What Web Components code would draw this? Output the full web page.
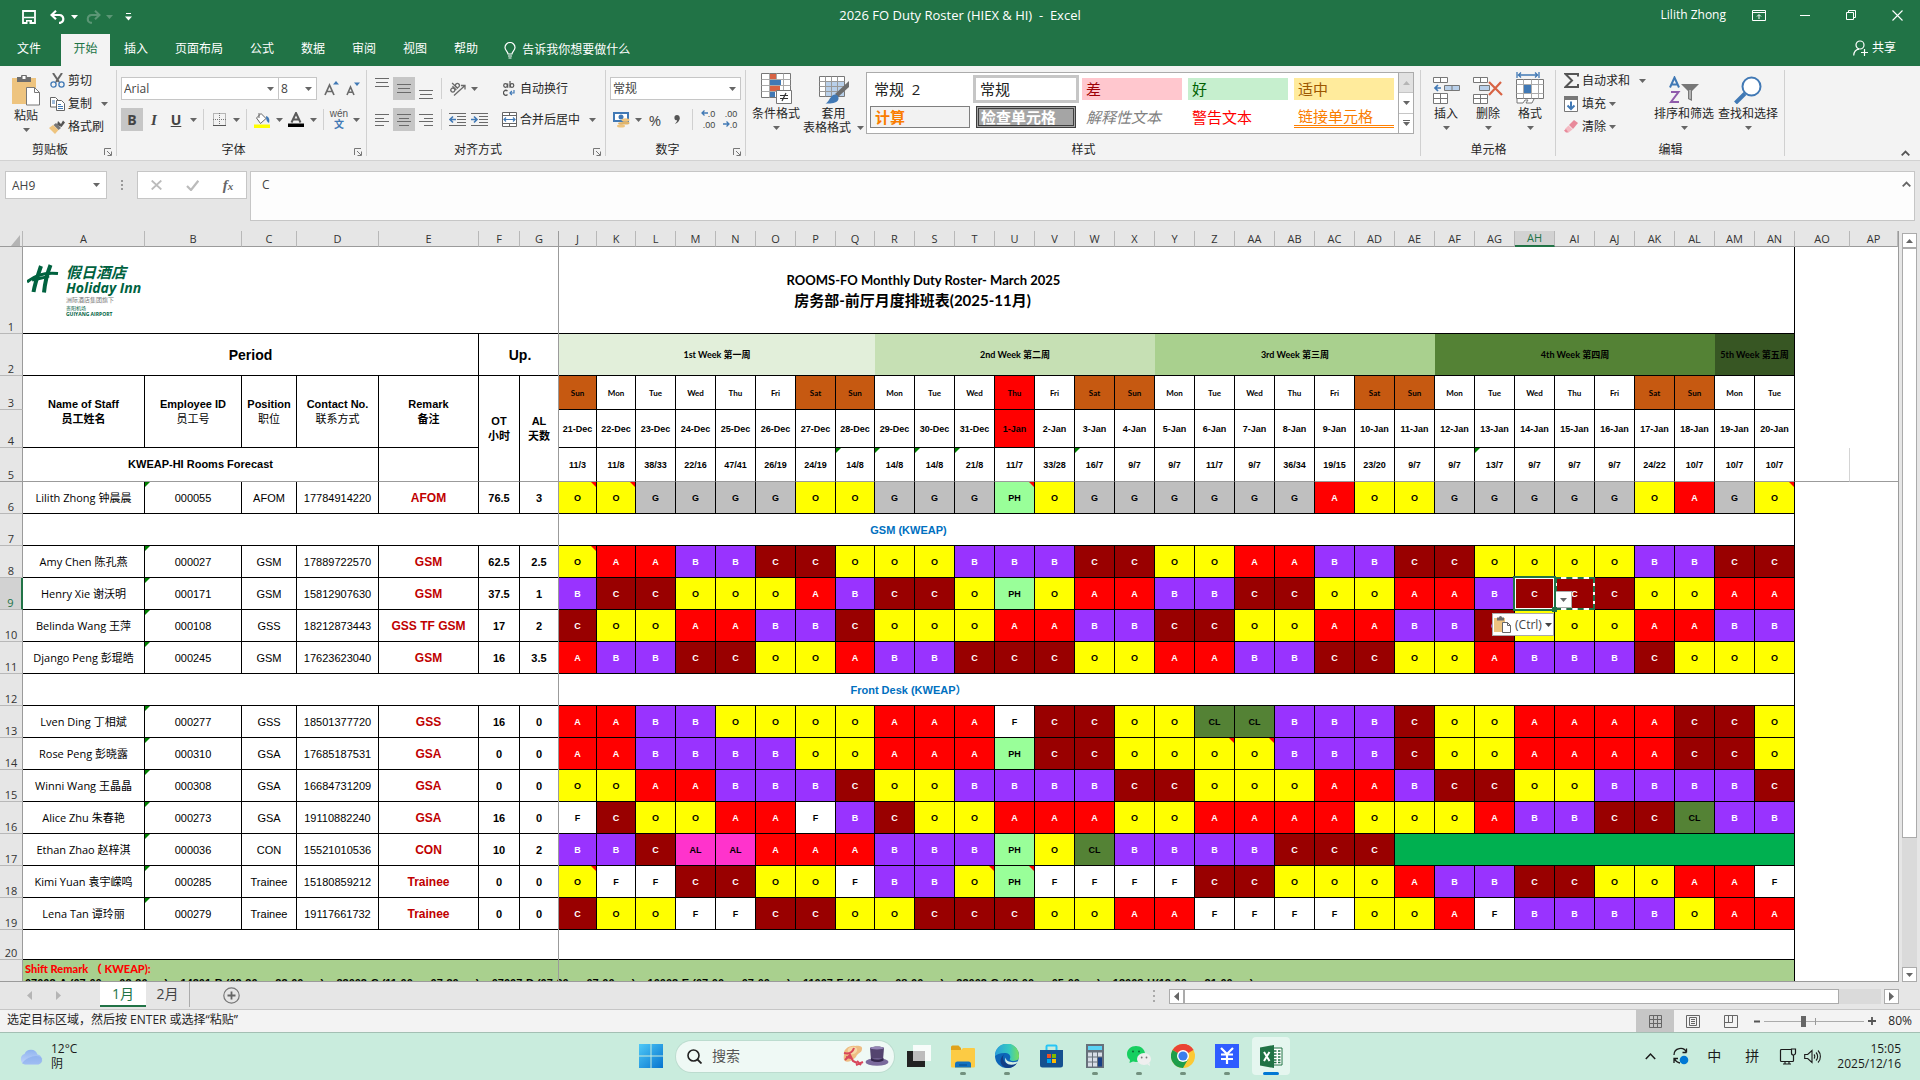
<!DOCTYPE html>
<html lang="zh-CN">
<head>
<meta charset="utf-8">
<title>2026 FO Duty Roster (HIEX &amp; HI) - Excel</title>
<style>
  html, body { margin: 0; height: 100%; }
  body { overflow: hidden; font: 12px/16px "Open Sans", "Noto Sans CJK SC", sans-serif; color: #262626; }
</style>
</head>
<body>
<excel-app></excel-app>
<script>
/* ---------- helpers ---------- */
const BASE = `<style>
  *, *::before, *::after { box-sizing: border-box; }
  button, input, select, textarea { font: inherit; color: inherit; margin: 0; padding: 0; border: 0; background: none; border-radius: 0; outline: 0; }
  button { display: inline-flex; align-items: center; justify-content: center; white-space: nowrap; }
</style>`;
function define(name, render) {
  customElements.define(name, class extends HTMLElement {
    connectedCallback() {
      if (this.shadowRoot) return;
      const t = document.createElement('template');
      t.innerHTML = BASE + render(this);
      this.attachShadow({ mode: 'open' }).append(t.content.cloneNode(true));
    }
  });
}
const attr = (el, n, d = '') => el.getAttribute(n) ?? d;

/* ---------- icons: [width, height, markup] ---------- */
const G = '#6a6a6a', BL = '#4179b5';
const lines = (rows) => rows.map(([x, y, w]) => `<path d="M${x} ${y}h${w}" stroke="${G}"/>`).join('');
const ICONS = {
  caret: [7, 4, `<path d="M0 0h7L3.500 4z" fill="currentColor"/>`],
  caretUp: [7, 4, `<path d="M0 4h7L3.500 0z" fill="currentColor"/>`],
  left: [5, 9, `<path d="M5 0v9L0 4.500z" fill="currentColor"/>`],
  right: [5, 9, `<path d="M0 0v9l5-4.500z" fill="currentColor"/>`],
  chevUp: [9, 6, `<path d="M.7 5.300 4.500 1.500l3.800 3.800" fill="none" stroke="currentColor" stroke-width="1.800"/>`],
  launcher: [8, 8, `<path d="M.5 7V.5H7M3 3l4 4M7.500 3.500v4h-4" fill="none" stroke="#777"/>`],
  save: [14, 14, `<path d="M1 1h12v12H1z" fill="none" stroke="#fff" stroke-width="1.800"/><path d="M2 7.500h10" stroke="#fff" stroke-width="1.500"/><path d="M4 10h6v4H4z" fill="#fff"/><path d="M5.500 11.500h2V14h-2z" fill="#217346"/>`],
  undo: [16, 14, `<path d="M6 .8 1.500 5 6 9.200M2 5h7.500a4 4 0 0 1 1 7.800H9" fill="none" stroke="#fff" stroke-width="2.200"/>`],
  redo: [16, 14, `<path d="M10 .8 14.500 5 10 9.200M14 5H6.500a4 4 0 0 0-1 7.800H7" fill="none" stroke="#5b9675" stroke-width="2"/>`],
  custom: [7, 8, `<path d="M1 .5h5" stroke="#fff"/><path d="M0 3.500h7L3.500 7.500z" fill="#fff"/>`],
  ribbonOpt: [14, 11, `<path d="M.5.500h13v10H.5zM.5 2.500h13" fill="none" stroke="#fff"/><path d="M7 9V5M5 6.500 7 4.500l2 2" fill="none" stroke="#fff"/>`],
  min: [10, 10, `<path d="M0 5.500h10" stroke="#fff"/>`],
  restore: [10, 10, `<path d="M.5 2.500h7v7h-7zM2.500 2.500v-2h7v7h-2" fill="none" stroke="#fff"/>`],
  close: [11, 11, `<path d="m.5.500 10 10m0-10-10 10" stroke="#fff" stroke-width="1.100"/>`],
  bulb: [12, 17, `<path d="M4 12c0-2.500-3-3.500-3-6.500a5 5 0 0 1 10 0c0 3-3 4-3 6.500zM4 14h4M4.500 16h3" fill="none" stroke="#fff" stroke-width="1.200"/>`],
  share: [15, 16, `<circle cx="7" cy="5" r="4" fill="none" stroke="#fff" stroke-width="1.200"/><path d="M.7 15.500c.3-4 2.500-6 5.300-6.300M8 12.500h7M11.500 9v7" fill="none" stroke="#fff" stroke-width="1.200"/>`],
  paste: [28, 31, `<path d="M0 3h24v26H0z" fill="#eec47f"/><path d="M5 2h4a3 3 0 0 1 6 0h4v5H5z" fill="#6d6d6d"/><rect x="10.500" y="1" width="3" height="3" fill="#fff"/><path d="M14.500 12.500h8l5 5v12.500h-13z" fill="#fff" stroke="#777"/><path d="M22.500 12.500v5h5" fill="none" stroke="#777"/>`],
  cut: [15, 15, `<path d="M3 0l6 9M12 0 6 9" stroke="#666" stroke-width="2"/><circle cx="3.500" cy="11.500" r="2.600" fill="none" stroke="${BL}" stroke-width="1.300"/><circle cx="11.500" cy="11.500" r="2.600" fill="none" stroke="${BL}" stroke-width="1.300"/>`],
  copy: [15, 14, `<path d="M.5.500h5l2.500 2.500v7H.5z" fill="#fff" stroke="#666"/><path d="M6.500 3.500h5l3 3v7h-8z" fill="#fff" stroke="#666"/><path d="M2 4h3M2 6h3M8 7.500h3M8 9.500h5M8 11.500h5" stroke="${BL}"/>`],
  painter: [16, 14, `<path d="M9 1l3 3 2-3.500 2 2L12.500 7 8 5z" fill="#555"/><path d="m7 3 5 5-2.500 2-5-5z" fill="#777"/><path d="M4 5 0 8l6 6 3.500-4z" fill="#eec47f"/>`],
  growA: [15, 15, `<path d="M1 14 5.500 4 10 14M2.500 10.500h6" fill="none" stroke="${G}" stroke-width="1.700"/><path d="M9 3.500h6L12 0z" fill="${BL}"/>`],
  shrinkA: [14, 14, `<path d="M1 13 4.500 5 8 13M2.300 10.300h4.500" fill="none" stroke="${G}" stroke-width="1.600"/><path d="M8 .5h6L11 4z" fill="${BL}"/>`],
  borders: [13, 13, `<path d="M.5.500h12v12H.5zM6.500 0v13M0 6.500h13" fill="none" stroke="#777" stroke-dasharray="1 1"/><path d="M0 12.500h13" stroke="#555"/>`],
  fill: [16, 16, `<path d="M2.500 6 7 1.500l5 5-5.500 5z" fill="#fff" stroke="#666"/><path d="M5 6V1" stroke="#666"/><path d="M12 4c4 1 3.500 5 3 7-2-1-3-3-3-7z" fill="${BL}"/><path d="M0 12.500h16V16H0z" fill="#ff0"/>`],
  fontColor: [16, 15, `<path d="M3.500 10.500 8 1l4.500 9.500M5 7.500h6" fill="none" stroke="#5a5a5a" stroke-width="2"/><path d="M0 11.500h16V15H0z"/>`],
  alignT: [14, 9, lines([[0, .5, 14], [1, 4.500, 12], [0, 8.500, 14]])],
  alignL: [14, 12, lines([[0, .5, 14], [0, 4.500, 9], [0, 7.500, 14], [0, 11.500, 9]])],
  alignC: [14, 12, lines([[0, .5, 14], [2, 4.500, 10], [0, 7.500, 14], [2, 11.500, 10]])],
  alignR: [14, 12, lines([[0, .5, 14], [5, 4.500, 9], [0, 7.500, 14], [5, 11.500, 9]])],
  orient: [17, 15, `<g transform="rotate(-45 7 8)"><circle cx="4" cy="6.500" r="2" fill="none" stroke="${G}" stroke-width="1.300"/><path d="M6.500 3.500v5.500M8.500 1v8" stroke="${G}" stroke-width="1.300"/><circle cx="10.500" cy="6.500" r="2" fill="none" stroke="${G}" stroke-width="1.300"/></g><path d="m5 14.500 11-10m-4 0h4v4" fill="none" stroke="${G}" stroke-width="1.300"/>`],
  outdent: [17, 13, `<path d="M0 .5h17M8 3.500h9M8 6.500h9M8 9.500h9M0 12.500h17" stroke="${G}"/><path d="M7 6.500H1.500M4 3.500l-3 3 3 3" fill="none" stroke="${BL}" stroke-width="1.600"/>`],
  indent: [17, 13, `<path d="M0 .5h17M8 3.500h9M8 6.500h9M8 9.500h9M0 12.500h17" stroke="${G}"/><path d="M0 6.500h5.500M3 3.500l3 3-3 3" fill="none" stroke="${BL}" stroke-width="1.600"/>`],
  wrap: [12, 15, `<circle cx="2.500" cy="4.500" r="1.800" fill="none" stroke="#555" stroke-width="1.200"/><path d="M4.700 2.500v4.200M7 0v6.700" stroke="#555" stroke-width="1.200"/><circle cx="9" cy="4.500" r="1.800" fill="none" stroke="#555" stroke-width="1.200"/><path d="M4.500 10a2.400 2.400 0 1 0 0 3.600" fill="none" stroke="#555" stroke-width="1.300"/><path d="M11 9v3H7m1.800-2L7 12l1.800 2" fill="none" stroke="${BL}" stroke-width="1.200"/>`],
  merge: [15, 15, `<path d="M.5.500h14v14H.5zM.5 3.500h14M.5 11.500h14M7.500.500v3M7.500 11.500v3" fill="#fff" stroke="#666"/><path d="M2 7.500h11M4 5.500l-2 2 2 2M11 5.500l2 2-2 2" fill="none" stroke="${BL}" stroke-width="1.200"/>`],
  currency: [17, 16, `<path d="M1 1h14v8H1z" fill="#fff" stroke="${BL}" stroke-width="2"/><circle cx="8" cy="5" r="2.500" fill="${BL}"/><ellipse cx="12.500" cy="8" rx="4" ry="1.800" fill="#eec47f"/><ellipse cx="12.500" cy="11" rx="4" ry="1.500" fill="#e0b46a"/><ellipse cx="8" cy="14" rx="4" ry="1.500" fill="#eec47f"/><ellipse cx="8" cy="11.500" rx="3" ry="1.300" fill="#e0b46a"/>`],
  comma: [6, 9, `<circle cx="3" cy="2.700" r="2.600" fill="#555"/><path d="M5.500 2.500C6 5.500 4 8 .8 9 3 7 3.500 5.500 3 3z" fill="#555"/>`],
  condFmt: [31, 31, `<path d="M.5.500h29v24H.5z" fill="#fff" stroke="#777"/><path d="M.5 6.500h29M.5 12.500h29M.5 18.500h29M8.500.500v24M15.500.500v24M22.500.500v24" stroke="#aaa"/><path d="M9 1h6v5H9zM9 13h10v5H9z" fill="#d86344"/><path d="M9 7h11v5H9zM9 19h5v5H9z" fill="${BL}"/><path d="M15.500 17.500h15v13h-15z" fill="#fff" stroke="#777"/><path d="M19 22.500h8M19 25.500h8M25 20l-4 8" stroke="#333" stroke-width="1.200"/>`],
  tableFmt: [30, 29, `<path d="M.5 1.500h25v20H.5z" fill="#fff" stroke="#777"/><path d="M7 7h18v14H7z" fill="#b9d0ea"/><path d="M.5 6.500h25M.5 11.500h25M.5 16.500h25M6.500 1.500v20M12.500 1.500v20M18.500 1.500v20" stroke="#999"/><path d="M30 6v6L19 22l-3-3z" fill="#6d6d6d"/><path d="M16 19.500c2 0 4 2 3.500 4.500-1 4-7 5-13 4.500 4-1.500 4-8 9.500-9z" fill="${BL}"/>`],
  insCell: [27, 28, `<path d="M.5 1.500h14v5H.5zM7.500 1.500v5M.5 17.500h14v10H.5zM7.500 17.500v10M.5 22.500h14" fill="#fff" stroke="#777"/><path d="M11.500 9.500h15v5h-15zM19 9.500v5" fill="#b9d0ea" stroke="#777"/><path d="M8 12H2m3-3-3 3 3 3" fill="none" stroke="${BL}" stroke-width="1.700"/>`],
  delCell: [30, 28, `<path d="M.5 1.500h14v5H.5zM7.500 1.500v5M.5 18.500h14v9H.5zM7.500 18.500v9M.5 22.500h14" fill="#fff" stroke="#777"/><path d="M6.500 9.500h10v5h-10z" fill="#b9d0ea" stroke="#777"/><path d="m16 6 13 13M28 6 16 19" stroke="#d86344" stroke-width="2.200"/>`],
  fmtCell: [29, 32, `<path d="M1 0v6M23 0v6M2 3h20M5 .5 2.500 3 5 5.500M19 .5 21.500 3 19 5.500" fill="none" stroke="${BL}" stroke-width="1.300"/><path d="M.5 7.500h27v19H.5z" fill="#fff" stroke="#777"/><path d="M.5 12.500h27M.5 21.500h27M7.500 7.500v19M15.500 7.500v19M22.500 7.500v19" stroke="#aaa"/><path d="M8 13h7v8H8z" fill="${BL}"/><path d="M1 27v4h6l2-3h3l-2 3h6l2-4" fill="#fff" stroke="#777"/>`],
  sigma: [15, 15, `<path d="M14 3.500V1H1.500L8 7.500 1.500 14H14v-3" fill="none" stroke="#555" stroke-width="2"/>`],
  fillDown: [14, 16, `<path d="M.5.500h13v15H.5z" fill="#fff" stroke="#777"/><path d="M0 0h14v4H0z" fill="#777"/><path d="M7 5.500V13M3.500 9.500 7 13l3.500-3.500" fill="none" stroke="${BL}" stroke-width="2"/>`],
  eraser: [14, 13, `<path d="m5 5 5-5 4 3-5 6z" fill="#e8899a"/><path d="M4.500 5.500 1 9l3.500 3.500 4-3z" fill="#f4b9c2"/><path d="M0 10.500 2 9l2.500 3.500H2z" fill="#e8899a"/>`],
  sort: [30, 28, `<path d="M1 11.500 5.500 1.500l4.500 10M2.500 8.500h6" fill="none" stroke="${BL}" stroke-width="2"/><path d="M2 16h7.500L2 26h8" fill="none" stroke="#8f5bab" stroke-width="2"/><path d="M12 8h18l-7 7v10l-4-2v-8z" fill="#777"/><path d="M20.500 14v8.500l1 .5V14z" fill="#eee"/>`],
  find: [28, 28, `<circle cx="17.500" cy="10.500" r="9" fill="#fff" stroke="${BL}" stroke-width="2"/><path d="M11 17.500 1.500 27" stroke="${BL}" stroke-width="4"/>`],
  cancel: [11, 10, `<path d="m.7.500 9.600 9M10.300.500.700 9.500" stroke="#bbb" stroke-width="1.800"/>`],
  check: [13, 11, `<path d="m1 6 4 4L12.300.800" fill="none" stroke="#bbb" stroke-width="2.200"/>`],
  corner: [9, 11, `<path d="M9 0v11H0z" fill="#b4b4b4"/>`],
  plus: [17, 17, `<circle cx="8.500" cy="8.500" r="7.700" fill="none" stroke="#777" stroke-width="1.200"/><path d="M8.500 4.500v8M4.500 8.500h8" stroke="#666" stroke-width="1.800"/>`],
  vNormal: [13, 13, `<path d="M.5.500h12v12H.5zM.5 4.500h12M.5 8.500h12M4.500.500v12M8.500.500v12" fill="none" stroke="#666"/>`],
  vPage: [14, 13, `<path d="M.5.500h13v12H.5z" fill="none" stroke="#666"/><path d="M3.500 2.500h7v8h-7zM5 4.500h4M5 6.500h4M5 8.500h4" fill="none" stroke="#666"/>`],
  vBreak: [14, 13, `<path d="M.5.500h13v12H.5zM.5 7.500h8V.5M4.500.500v7" fill="none" stroke="#666"/>`],
  zMinus: [6, 3, `<path d="M0 1.500h6" stroke="#555" stroke-width="2"/>`],
  zPlus: [8, 8, `<path d="M0 4h8M4 0v8" stroke="#555" stroke-width="1.800"/>`],
  pasteSm: [18, 17, `<path d="M0 2h11v14H0z" fill="#eec47f"/><path d="M3 1.500h2a1.500 1.500 0 0 1 3 0h2v3H3z" fill="#6d6d6d"/><path d="M8.500 6.500h5l3 3v7h-8z" fill="#fff" stroke="#666"/><path d="M13.500 6.500v3h3" fill="none" stroke="#666"/>`],
  cloud: [25, 17, `<defs><linearGradient id="cl" x1="0" y1="0" x2="0" y2="1"><stop offset="0" stop-color="#8fb4ef"/><stop offset="1" stop-color="#c3d6fb"/></linearGradient></defs><path d="M6 16.500a5.500 5.500 0 0 1-.5-10.500 7 7 0 0 1 13 .5 5.200 5.200 0 0 1 1 10z" fill="url(#cl)"/><path d="M3 15.500c5-7 16-10 20-5a5.200 5.200 0 0 1-3.500 6H6z" fill="#7ba3ea" opacity=".5"/>`],
  start: [24, 24, `<defs><linearGradient id="w" x1="0" y1="0" x2="1" y2="1"><stop offset="0" stop-color="#4fc9f7"/><stop offset="1" stop-color="#0674cf"/></linearGradient></defs><path d="M0 0h11.500v11.500H0zM12.500 0H24v11.500H12.500zM0 12.500h11.500V24H0zM12.500 12.500H24V24H12.500z" fill="url(#w)"/>`],
  search: [15, 15, `<circle cx="6.500" cy="6.500" r="5.500" fill="none" stroke="#222" stroke-width="1.600"/><path d="m10.500 10.500 4 4" stroke="#222" stroke-width="1.800"/>`],
  hats: [47, 22, `<path d="M2 9C1 5 7 0 13 1c3-1 8 0 7 3 0 4-5 4-6 8-4 4-9 6-11 4-2-1-1-5-1-7z" fill="#eebd83"/><path d="M6 4c2-3 8-3 9 0s-3 6-6 5-4-3-3-5z" fill="#f6d9a8"/><path d="M2 8c4 1 8 1 10-5M4 12l5 1M3 15l5-5 3 6 4 2M14 20l7-3M15 16l4 4" fill="none" stroke="#d8465b" stroke-width="2"/><path d="M28 3c3-2 12-2 14 0l-1 12H29z" fill="#54446f"/><ellipse cx="35" cy="17" rx="11.500" ry="3.800" fill="#7a6a9c"/><path d="M29 13c4 2 8 2 12.500 0v2.500c-4 2-8.500 2-12.500 0z" fill="#35284d"/><ellipse cx="35" cy="3" rx="7" ry="1.500" fill="#9485b5"/>`],
  taskview: [24, 24, `<path d="M0 7h18v16H0z" fill="#222"/><path d="M6 1h18v16H6z" fill="#fff" opacity=".85"/><path d="M6 7h12v10H6z" fill="#bdbdbd"/>`],
  explorer: [24, 23, `<path d="M0 2a1.500 1.500 0 0 1 1.500-1.500h6L10 3v5H0z" fill="#e0a21b"/><path d="M0 5h10l2-2h11a1 1 0 0 1 1 1v17.500a1 1 0 0 1-1 1H1a1 1 0 0 1-1-1z" fill="#fccb44"/><path d="M4 22.500V19a2.500 2.500 0 0 1 2.500-2.500h11A2.500 2.500 0 0 1 20 19v3.500z" fill="#1272bf"/><path d="M8 20h8" stroke="#0b4f91" stroke-width="1.200"/>`],
  edge: [24, 24, `<defs><linearGradient id="e1" x1="0" y1=".3" x2="1" y2=".3"><stop offset="0" stop-color="#2a9fdc"/><stop offset=".6" stop-color="#35c9c0"/><stop offset="1" stop-color="#7ade5a"/></linearGradient></defs><circle cx="12" cy="12" r="12" fill="#0d66b8"/><path d="M0 12A12 12 0 0 1 24 11c.5 4-2 6-5 6-3 .2-5-1-4-2.500 1-2-.3-5-4-5.500C6 8.500 1.500 10 0 12z" fill="url(#e1)"/><path d="M8 13c0 6 6 9 14 6-3 5-9 6-13 4C4 20 4 13 11 9c-2 1-3 2.500-3 4z" fill="#123f86"/><path d="M10.500 13.500C11 18 17 19 22.500 17.500l-1 2c-7 3-13 0-11-6z" fill="#d5efe5"/>`],
  store: [23, 24, `<path d="M6.500 7V2.500a1 1 0 0 1 1-1h8a1 1 0 0 1 1 1V7" fill="none" stroke="#27c5f5" stroke-width="2"/><path d="M0 6h23v15a2.500 2.500 0 0 1-2.500 2.500h-18A2.500 2.500 0 0 1 0 21z" fill="#15508f"/><path d="M7 10h4v4H7z" fill="#f25022"/><path d="M12 10h4v4h-4z" fill="#7fba00"/><path d="M7 15h4v4H7z" fill="#00a4ef"/><path d="M12 15h4v4h-4z" fill="#ffb900"/>`],
  calc: [18, 24, `<path d="M0 0h18v24H0z" fill="#66707a"/><path d="M2 2h14v4H2z" fill="#5bd3f5"/><path d="M2 8.500h4v4H2zM7 8.500h4v4H7zM12 8.500h4v4h-4zM2 13.500h4v4H2zM7 13.500h4v4H7zM2 18.500h4v4H2zM7 18.500h4v4H7z" fill="#d7dde6"/><path d="M12 13.500h4v9h-4z" fill="#173f85"/>`],
  wechat: [24, 20, `<path d="M9 0c5 0 9 3.500 9 8s-4 8-9 8c-1 0-2-.2-3-.5L2.500 17l.5-3C1 12.500 0 10.500 0 8c0-4.500 4-8 9-8z" fill="#17cf60"/><ellipse cx="17" cy="13" rx="7" ry="6" fill="#efefef"/><path d="M20 18l3 2-.5-3z" fill="#efefef"/><circle cx="6" cy="5.500" r="1" fill="#0b6b32"/><circle cx="12" cy="5.500" r="1" fill="#0b6b32"/><circle cx="14.700" cy="11.500" r=".9" fill="#777"/><circle cx="19.500" cy="11.500" r=".9" fill="#777"/>`],
  chrome: [24, 24, `<circle cx="12" cy="12" r="12" fill="#fcc934"/><path d="M12 12 1.600 6A12 12 0 0 1 22.400 6z" fill="#ea4335"/><path d="M12 0a12 12 0 0 1 10.400 6H12z" fill="#ea4335"/><path d="M1.600 6A12 12 0 0 0 12 24l5.200-9L12 12z" fill="#1e9e4b"/><circle cx="12" cy="12" r="6" fill="#fff"/><circle cx="12" cy="12" r="4.600" fill="#3b7ded"/>`],
  yen: [24, 24, `<path d="M0 0h24v24H0z" fill="#2f5cff"/><path d="M6 4l6 6 6-6M6 10.500h12M6 15h12M12 10v10" fill="none" stroke="#fff" stroke-width="2.200"/>`],
  excel: [23, 23, `<path d="M12 3h10v17H12z" fill="#fff" stroke="#207245"/><path d="M14 6h2.500M18 6h2.500M14 9h2.500M18 9h2.500M14 12h2.500M18 12h2.500M14 15h2.500M18 15h2.500M14 17.500h2.500M18 17.500h2.500" stroke="#207245" stroke-width="1.400"/><path d="M0 2.500 14 0v23L0 20.500z" fill="#207245"/><path d="m4 7 5.500 9M9.500 7 4 16" stroke="#fff" stroke-width="2"/>`],
  trayUp: [11, 8, `<path d="m.8 7 4.700-5 4.700 5" fill="none" stroke="#1b1b1b" stroke-width="1.500"/>`],
  sync: [18, 18, `<path d="M2 8a6.500 6.500 0 0 1 12.500-2.500V1.500M14.500 5.500h-4M2 16v-4.500h4M2.500 11.500A7 7 0 0 0 8 16" fill="none" stroke="#1b1b1b" stroke-width="1.300"/><circle cx="12" cy="13" r="4.300" fill="#0078d4"/>`],
  monitor: [18, 17, `<path d="M12 1.500H2.500a1 1 0 0 0-1 1v10a1 1 0 0 0 1 1h11a1 1 0 0 0 1-1V9M4 16h8M6 13.500V16M10 13.500V16M12.500 1h4v4a2 2 0 0 1-4 0zM14.500 7v3" fill="none" stroke="#1b1b1b" stroke-width="1.200"/>`],
  speaker: [17, 15, `<path d="M.7 5.500h3L8 1.500v12l-4.300-4h-3zM10 5.500c1 1 1 3 0 4M12 3.500c2.200 2.200 2.200 6 0 8M14 1.500c3.200 3.200 3.200 9 0 12" fill="none" stroke="#1b1b1b" stroke-width="1.100"/>`]
};
define('x-icon', el => {
  const [w, h, m] = ICONS[attr(el, 'name')];
  return `<style>:host{display:inline-flex;flex:none}svg{display:block}</style>
  <svg width="${w}" height="${h}" viewBox="0 0 ${w} ${h}" aria-hidden="true">${m}</svg>`;
});

/* ---------- title bar ---------- */
define('title-bar', () => `<style>
  :host{display:grid;grid-template-columns:1fr auto 1fr;align-items:center;height:34px;background:#217346;color:#fff}
  .quick{display:flex;align-items:center;padding-left:22px}
  .quick x-icon[name=undo]{margin-left:14px}.quick x-icon[name=redo]{margin-left:7px}
  .quick .c{margin-left:5px}.quick .dim{color:#5b9675}.quick x-icon[name=custom]{margin-left:12px}
  .right{display:flex;justify-content:flex-end;align-items:center}
  .user{margin-right:10px}
  h1{font-size:13px;font-weight:400;margin:0;padding-bottom:4px;white-space:pre}
  .right{padding-bottom:4px}
  .win{width:46px;height:30px}
  </style>
  <div class="quick"><button aria-label="保存"><x-icon name="save"></x-icon></button><button aria-label="撤消"><x-icon name="undo"></x-icon><x-icon class="c" name="caret"></x-icon></button>
  <button aria-label="恢复" class="dim"><x-icon name="redo"></x-icon><x-icon class="c" name="caret"></x-icon></button><button aria-label="自定义"><x-icon name="custom"></x-icon></button></div>
  <h1>2026 FO Duty Roster (HIEX &amp; HI)  -  Excel</h1>
  <div class="right"><span class="user">Lilith Zhong</span>
  <button class="win" aria-label="功能区选项"><x-icon name="ribbonOpt"></x-icon></button><button class="win" aria-label="最小化"><x-icon name="min"></x-icon></button>
  <button class="win" aria-label="还原"><x-icon name="restore"></x-icon></button><button class="win" aria-label="关闭"><x-icon name="close"></x-icon></button></div>`);

/* ---------- ribbon tabs ---------- */
define('ribbon-tabs', () => `<style>
  :host{display:flex;height:32px;background:#217346;color:#fff;padding:0 24px 0 4px}
  nav{display:flex;gap:1px}
  .tab{padding:0 13px 2px;height:32px}
  .file{margin-right:6px}
  .on{background:#f3f3f3;color:#217346;width:49px}
  .tell{gap:6px;margin-left:12px}
  .share{gap:4px;margin-left:auto;padding-bottom:4px}
  </style><nav>
  ${['文件', '开始', '插入', '页面布局', '公式', '数据', '审阅', '视图', '帮助'].map((t, i) => `<button class="tab${i == 0 ? ' file' : i == 1 ? ' on' : ''}">${t}</button>`).join('')}
  <button class="tell"><x-icon name="bulb"></x-icon>告诉我你想要做什么</button></nav>
  <button class="share"><x-icon name="share"></x-icon>共享</button>`);

/* ---------- ribbon parts ---------- */
define('ribbon-group', el => `<style>
  :host{display:flex;flex-direction:column;position:relative;height:94px;flex:none}
  :host::after{content:"";position:absolute;right:0;top:4px;bottom:4px;width:1px;background:#d0d0d0}
  .body{flex:1;display:flex;padding:0 4px}
  .foot{display:flex;align-items:center;justify-content:center;height:16px;margin-bottom:2px}
  :host([launch]) .foot{padding-right:17px}
  .launch{position:absolute;right:5px;bottom:4px}
  </style><div class="body"><slot></slot></div><div class="foot">${attr(el, 'label')}</div>
  ${el.hasAttribute('launch') ? `<button class="launch" aria-label="${attr(el, 'label')}设置"><x-icon name="launcher"></x-icon></button>` : ''}`);

define('tool-button', el => {
  const label = attr(el, 'label'), icon = attr(el, 'icon');
  return `<style>
  :host{display:inline-flex;flex:none}
  button{height:23px}
  .i{width:22px;display:inline-flex;justify-content:center;align-items:center}
  :host([on]) .i{background:#c6c6c6;height:23px}
  .c{width:12px;display:inline-flex;justify-content:center;color:#666}
  :host([wide]) .c{width:24px}
  </style><button aria-label="${label || attr(el, 'tip', icon)}"><span class="i">${icon ? `<x-icon name="${icon}"></x-icon>` : '<slot></slot>'}</span>${label ? `<span>${label}</span>` : ''}${el.hasAttribute('caret') ? '<span class="c"><x-icon name="caret"></x-icon></span>' : ''}</button>`;
});

define('big-button', el => `<style>
  :host{display:inline-flex;flex:none}
  button{flex:1;flex-direction:column;justify-content:flex-start;line-height:14px;padding-top:6px}
  .i{height:32px;display:flex;align-items:flex-end;margin-bottom:3px}
  .c{height:14px;display:flex;align-items:center;gap:6px}
  x-icon[name=caret]{color:#666}
  </style><button><span class="i"><x-icon name="${attr(el, 'icon')}"></x-icon></span><span>${attr(el, 'label')}</span><span class="c">${attr(el, 'label2')}<x-icon name="caret"></x-icon></span></button>`);

define('combo-box', el => `<style>
  :host{display:inline-block;position:relative;height:23px;flex:none}
  select{appearance:none;width:100%;height:23px;background:#fff;border:1px solid #c6c6c6;padding:0 14px 0 2px;color:#444}
  x-icon{position:absolute;right:5px;top:10px;color:#666;pointer-events:none}
  </style><select aria-label="${attr(el, 'label')}"><option>${attr(el, 'value')}</option></select><x-icon name="caret"></x-icon>`);

define('style-gallery', () => {
  const s = [['常规&nbsp; 2', 'n2'], ['常规', 'sel'], ['差', 'bad'], ['好', 'good'], ['适中', 'neu'], ['计算', 'calc'], ['检查单元格', 'chk'], ['解释性文本', 'exp'], ['警告文本', 'warn'], ['链接单元格', 'link']];
  return `<style>
  :host{display:flex;height:62px;border:1px solid #ababab;background:#fff;margin-top:6px}
  .g{display:grid;grid-template-columns:repeat(5,100px);grid-auto-rows:22px;gap:6px;padding:5px 3px 0;width:531px}
  .g button{justify-content:flex-start;padding-left:4px;font-size:15px;line-height:20px;color:#222}
  .g .sel{outline:3px solid #c6c6c6}
  .g .bad{background:#ffc7ce;color:#9c0006}.g .good{background:#c6efce;color:#006100}.g .neu{background:#ffeb9c;color:#9c5700}
  .g .calc{background:#f2f2f2;border:1px solid #7f7f7f;color:#fa7d00;font-weight:700}
  .g .chk{background:#a5a5a5;border:3px double #3f3f3f;color:#fff;font-weight:700;padding-left:2px}
  .g .exp{color:#7f7f7f;font-style:italic}.g .warn{color:#f00}
  .g .link{color:#fa7d00;border-bottom:3px double #ff8001}
  .s{display:flex;flex-direction:column;width:15px;border-left:1px solid #ababab;flex:none}
  .s button{flex:1;color:#666}.s button+button{border-top:1px solid #c6c6c6}.s button:first-child{background:#e1e1e1;color:#b5b5b5}
  .more{flex-direction:column;gap:1px}.more::before{content:"";width:7px;height:1px;background:#666}
  </style><div class="g">${s.map(([t, c]) => `<button class="${c}">${t}</button>`).join('')}</div>
  <div class="s"><button aria-label="上一行"><x-icon name="caretUp"></x-icon></button><button aria-label="下一行"><x-icon name="caret"></x-icon></button><button class="more" aria-label="其他"><x-icon name="caret"></x-icon></button></div>`;
});

define('excel-ribbon', () => `<style>
  :host{display:flex;height:95px;background:#f3f3f3;border-bottom:1px solid #d2d2d2}
  .col{display:flex;flex-direction:column}
  .two{padding-top:11px;gap:8px}.three{padding-top:3px}
  .row{display:flex;height:23px;align-items:center}
  .sep{width:1px;height:21px;background:#d0d0d0;margin:0 4px}
  .tall{width:1px;height:55px;background:#d0d0d0;margin:10px 4px 0}
  .clip{width:117px}.font{width:250px}.align{width:239px}.num{width:140px}.style{width:675px}.cells{width:135px}.edit{width:229px}
  .f1{width:158px}.f2{width:39px;margin:0 3px 0 -1px}.n1{width:131px}
  .paste{margin:2px 6px 0 8px}
  b,i,u{font-size:14px;color:#444}i{font-family:"Liberation Serif",serif;font-weight:700;font-size:15px}u{font-weight:700}
  .pct{font-size:15px;color:#444}
  .wen{font:10px/11px "Liberation Sans","Noto Sans CJK SC",sans-serif;color:#555;text-align:center}.wen em{display:block;height:12px;line-height:12px;font-style:normal;color:#4179b5;font-weight:700}
  .dec{display:block;font:9px/11px "Liberation Sans",sans-serif;text-align:right;color:#444}.dec em{font-style:normal;color:#4179b5}
  .dec svg{vertical-align:1px}
  .t{margin-top:-12px}.bt{margin-top:12px}
  .cells big-button{width:42px}
  .cf{margin:0 3px 0 2px}.tf{margin-right:2px}.so{margin-right:4px}
  .end{margin-left:auto;align-self:flex-end;padding:0 10px 4px 0;color:#555;line-height:1}
  </style>
  <ribbon-group class="clip" label="剪贴板" launch><big-button class="paste" icon="paste" label="粘贴"></big-button>
   <div class="col three"><tool-button icon="cut" label="剪切"></tool-button><tool-button icon="copy" label="复制" caret wide></tool-button><tool-button icon="painter" label="格式刷"></tool-button></div></ribbon-group>
  <ribbon-group class="font" label="字体" launch><div class="col two">
   <div class="row"><combo-box class="f1" label="字体" value="Arial"></combo-box><combo-box class="f2" label="字号" value="8"></combo-box><tool-button icon="growA"></tool-button><tool-button icon="shrinkA"></tool-button></div>
   <div class="row"><tool-button on tip="加粗"><b>B</b></tool-button><tool-button tip="倾斜"><i>I</i></tool-button><tool-button caret tip="下划线"><u>U</u></tool-button><span class="sep"></span><tool-button icon="borders" caret></tool-button><span class="sep"></span><tool-button icon="fill" caret></tool-button><tool-button icon="fontColor" caret></tool-button><span class="sep"></span><tool-button caret tip="拼音"><span class="wen">wén<em>文</em></span></tool-button></div>
  </div></ribbon-group>
  <ribbon-group class="align" label="对齐方式" launch>
   <div class="col two"><div class="row"><tool-button class="t" icon="alignT"></tool-button><tool-button on icon="alignT"></tool-button><tool-button class="bt" icon="alignT"></tool-button><span class="sep"></span><tool-button icon="orient" caret></tool-button></div>
   <div class="row"><tool-button icon="alignL"></tool-button><tool-button on icon="alignC"></tool-button><tool-button icon="alignR"></tool-button><span class="sep"></span><tool-button icon="outdent"></tool-button><tool-button icon="indent"></tool-button></div></div>
   <span class="tall"></span>
   <div class="col two"><div class="row"><tool-button icon="wrap" label="自动换行"></tool-button></div><div class="row"><tool-button icon="merge" label="合并后居中" caret wide></tool-button></div></div></ribbon-group>
  <ribbon-group class="num" label="数字" launch><div class="col two"><div class="row"><combo-box class="n1" label="数字格式" value="常规"></combo-box></div>
   <div class="row"><tool-button icon="currency" caret></tool-button><tool-button tip="百分比"><span class="pct">%</span></tool-button><tool-button icon="comma"></tool-button><span class="sep"></span><tool-button tip="增加小数位"><span class="dec"><svg width="7" height="6" viewBox="0 0 7 6"><path d="M7 3H1M3.500.5 1 3l2.500 2.500" fill="none" stroke="#4179b5" stroke-width="1.300"/></svg>.0<br>.00</span></tool-button><tool-button tip="减少小数位"><span class="dec">.00<br><svg width="7" height="6" viewBox="0 0 7 6"><path d="M0 3h6M3.500.5 6 3 3.500 5.500" fill="none" stroke="#4179b5" stroke-width="1.300"/></svg>.0</span></tool-button></div></div></ribbon-group>
  <ribbon-group class="style" label="样式"><big-button class="cf" icon="condFmt" label="条件格式"></big-button><big-button class="tf" icon="tableFmt" label="套用" label2="表格格式"></big-button><style-gallery></style-gallery></ribbon-group>
  <ribbon-group class="cells" label="单元格"><big-button icon="insCell" label="插入"></big-button><big-button icon="delCell" label="删除"></big-button><big-button icon="fmtCell" label="格式"></big-button></ribbon-group>
  <ribbon-group class="edit" label="编辑"><div class="col three"><tool-button icon="sigma" label="自动求和" caret wide></tool-button><tool-button icon="fillDown" label="填充" caret></tool-button><tool-button icon="eraser" label="清除" caret></tool-button></div><big-button class="so" icon="sort" label="排序和筛选"></big-button><big-button icon="find" label="查找和选择"></big-button></ribbon-group>
  <button class="end" aria-label="折叠功能区"><x-icon name="chevUp"></x-icon></button>`);

/* ---------- formula bar ---------- */
define('formula-bar', () => `<style>
  :host{display:flex;align-items:flex-start;height:70px;background:#e6e6e6;padding:10px 5px 0}
  .name{position:relative;width:102px;height:28px}
  .name input{width:100%;height:100%;border:1px solid #c6c6c6;background:#fff;padding-left:6px;color:#444}
  .name x-icon{position:absolute;right:7px;top:12px;color:#666}
  .dots{width:3px;margin:9px 13px 0 14px;display:grid;gap:2px}.dots i{width:2px;height:2px;background:#999}
  .fx{display:flex;width:110px;height:28px;border:1px solid #c6c6c6;background:#fff}
  .fx button{flex:1}
  .f{font:italic 700 15px "Liberation Serif",serif;color:#666}.f small{font-size:11px}
  .in{position:relative;flex:1;height:50px;margin-left:3px}
  textarea{display:block;width:100%;height:100%;resize:none;border:1px solid #c6c6c6;background:#fdfdfd;padding:5px 11px;color:#444}
  .in x-icon{position:absolute;right:4px;top:10px;color:#666}
  </style>
  <div class="name"><input aria-label="名称框" value="AH9"><x-icon name="caret"></x-icon></div>
  <div class="dots"><i></i><i></i><i></i></div>
  <div class="fx"><button aria-label="取消"><x-icon name="cancel"></x-icon></button><button aria-label="输入"><x-icon name="check"></x-icon></button><button aria-label="插入函数"><span class="f">f<small>x</small></span></button></div>
  <div class="in"><textarea aria-label="编辑栏">C</textarea><x-icon name="chevUp"></x-icon></div>`);

/* ---------- worksheet ---------- */
const DAYS = 'J K L M N O P Q R S T U V W X Y Z AA AB AC AD AE AF AG AH AI AJ AK AL AM AN'.split(' ');
const FORECAST = '11/3 11/8 38/33 22/16 47/41 26/19 24/19 14/8 14/8 14/8 21/8 11/7 33/28 16/7 9/7 9/7 11/7 9/7 36/34 19/15 23/20 9/7 9/7 13/7 9/7 9/7 9/7 24/22 10/7 10/7 10/7'.split(' ');
const WEEKDAY = ['Sun', 'Mon', 'Tue', 'Wed', 'Thu', 'Fri', 'Sat'];
const STAFF = {
  6: ['Lilith Zhong 钟晨晨', '000055', 'AFOM', '17784914220', 'AFOM', '76.5', '3', 'O O G G G G O O G G G PH O G G G G G G A O O G G G G G O A G O'],
  8: ['Amy Chen 陈孔燕', '000027', 'GSM', '17889722570', 'GSM', '62.5', '2.5', 'O A A B B C C O O O B B B C C O O A A B B C C O O O O B B C C'],
  9: ['Henry Xie 谢沃明', '000171', 'GSM', '15812907630', 'GSM', '37.5', '1', 'B C C O O O A B C C O PH O A A B B C C O O A A B C C C O O A A'],
  10: ['Belinda Wang 王萍', '000108', 'GSS', '18212873443', 'GSS TF GSM', '17', '2', 'C O O A A B B C O O O A A B B C C O O A A B B C O O O A A B B'],
  11: ['Django Peng 彭琨皓', '000245', 'GSM', '17623623040', 'GSM', '16', '3.5', 'A B B C C O O A B B C C C O O A A B B C C O O A B B B C O O O'],
  13: ['Lven Ding 丁相斌', '000277', 'GSS', '18501377720', 'GSS', '16', '0', 'A A B B O O O O A A A F C C O O CL CL B B B C O O A A A A C C O'],
  14: ['Rose Peng 彭晓露', '000310', 'GSA', '17685187531', 'GSA', '0', '0', 'A A B B B B O O A A A PH C C O O O O B B B C O O A A A A C C O'],
  15: ['Winni Wang 王晶晶', '000308', 'GSA', '16684731209', 'GSA', '0', '0', 'O O A A B B B C O O B B B B C C O O O A A B C C O O B B B B C'],
  16: ['Alice Zhu 朱春艳', '000273', 'GSA', '19110882240', 'GSA', '16', '0', 'F C O O A A F B C O O A A A O O A A A A O O O A B B C C CL B B'],
  17: ['Ethan Zhao 赵梓淇', '000036', 'CON', '15521010536', 'CON', '10', '2', 'B B C AL AL A A A B B B PH O CL B B B B C C C'],
  18: ['Kimi Yuan 袁宇嵘鸣', '000285', 'Trainee', '15180859212', 'Trainee', '0', '0', 'O F F C C O O F B B O PH F F F F C C O O O A B B C C O O A A F'],
  19: ['Lena Tan 谭玲丽', '000279', 'Trainee', '19117661732', 'Trainee', '0', '0', 'C O O F F C C O O C C C O O A A F F F F O O A F B B B B O A A']
};
const NOTES = { 6: ['J', 'K', 'U', 'AN'], 8: ['J'], 14: ['Z', 'AA'], 18: ['J', 'T', 'U'] };
const TEXTNUM = ['Q', 'R', 'S', 'T', 'W', 'AG'];
const SHIFTS = ['07003-A (07:00　- 03:30　', '14301-B (03:30　- 23:00　', '23003-C (11:00　- 07:30　', '07007-D (07:00　- 07:00　', '10003-E (07:00　- 07:00　', '11007-F (11:00　- 08:00　', '23003-G (08:00　- 05:00　', '13008-H(12:00　- 21:00　'];

function sheetRows() {
  const tail = '<td class="n"></td><td class="n"></td>';
  const rh = n => `<th scope="row" class="rh${n == 9 ? ' cur' : ''}">${n}</th>`;
  const wk = DAYS.map((c, i) => [WEEKDAY[i % 7], i]);
  const kind = (d, i) => i == 11 ? 'hol' : (d == 'Sat' || d == 'Sun') ? 'we' : '';
  const date = i => i < 11 ? (21 + i) + '-Dec' : (i - 10) + '-Jan';
  const staff = n => {
    const [name, id, pos, tel, rem, ot, al, s] = STAFF[n];
    const codes = s.split(' ');
    const cells = codes.map((c, i) => {
      const col = DAYS[i], note = NOTES[n]?.includes(col) ? ' note' : '';
      let extra = '', cls = '';
      if (n == 9 && col == 'AH') { cls = ' sel'; extra = '<button class="ctrl"><x-icon name="pasteSm"></x-icon>(Ctrl)<x-icon name="caret"></x-icon></button>'; }
      if (n == 9 && col == 'AI') { cls = ' ants'; extra = '<button class="dd" aria-label="下拉"><x-icon name="caret"></x-icon></button>'; }
      return `<td class="s ${c}${note}${cls}">${c}${extra}</td>`;
    }).join('');
    return `<tr class="r32">${rh(n)}<td class="nm">${name}</td><td class="id tn">${id}</td><td>${pos}</td><td>${tel}</td><td class="rem">${rem}</td><td class="b">${ot}</td><td class="b g">${al}</td>${cells}${codes.length < 31 ? `<td colspan="${31 - codes.length}" class="leave"></td>` : ''}${tail}</tr>`;
  };
  const section = (n, t) => `<tr class="r32">${rh(n)}<td colspan="38" class="sec">${t}</td>${tail}</tr>`;
  const range = (a, b) => Array.from({ length: b - a + 1 }, (_, i) => staff(a + i)).join('');
  return `
  <tr class="r1">${rh(1)}<td colspan="38" class="title"><brand-logo></brand-logo><h2>ROOMS-FO Monthly Duty Roster- March 2025</h2><p>房务部-前厅月度排班表(2025-11月)</p></td>${tail}</tr>
  <tr class="r2">${rh(2)}<th colspan="5" class="big">Period</th><th colspan="2" class="big g">Up.</th>
   <th colspan="8" class="w w1">1st Week 第一周</th><th colspan="7" class="w w2">2nd Week 第二周</th><th colspan="7" class="w w3">3rd Week 第三周</th><th colspan="7" class="w w4">4th Week 第四周</th><th colspan="2" class="w w5">5th Week 第五周</th>${tail}</tr>
  <tr class="r3">${rh(3)}<th rowspan="2" class="h">Name of Staff<br>员工姓名</th><th rowspan="2" class="h">Employee ID<br><span>员工号</span></th><th rowspan="2" class="h">Position<br><span>职位</span></th><th rowspan="2" class="h">Contact No.<br><span>联系方式</span></th><th rowspan="2" class="h">Remark<br>备注</th><th rowspan="3" class="h pane">OT<br>小时</th><th rowspan="3" class="h g pane">AL<br>天数</th>
   ${wk.map(([d, i]) => `<th class="d ${kind(d, i)}">${d}</th>`).join('')}${tail}</tr>
  <tr class="r4">${rh(4)}${wk.map(([d, i]) => `<th class="dt ${i == 11 ? 'hol' : ''}">${date(i)}</th>`).join('')}${tail}</tr>
  <tr class="r5">${rh(5)}<th colspan="4" class="h">KWEAP-HI Rooms Forecast</th><td></td>
   ${FORECAST.map((f, i) => `<td class="dt b${TEXTNUM.includes(DAYS[i]) ? ' tn' : ''}">${f}</td>`).join('')}<td class="n ao"></td><td class="n"></td></tr>
  ${staff(6)}${section(7, 'GSM (KWEAP)')}${range(8, 11)}${section(12, 'Front Desk (KWEAP）')}${range(13, 19)}
  <tr class="r20">${rh(20)}<td colspan="38"></td>${tail}</tr>
  <tr class="r21">${rh('')}<td colspan="38" class="remark"><strong>Shift Remark （ KWEAP):</strong><div>${SHIFTS.join('&nbsp; ),&nbsp; &nbsp;')}&nbsp; )</div></td>${tail}</tr>`;
}

define('brand-logo', () => `<style>
  :host{position:absolute;left:4px;top:17px;display:flex;gap:7px;color:#00623f;text-align:left;font-family:"Open Sans","Noto Sans CJK SC",sans-serif}
  div{font-weight:700;font-style:italic}
  .cn{font-size:15px;line-height:16px}.en{font-size:14px;line-height:16px}
  .s{font-size:6px;line-height:9px;font-style:normal;font-weight:400;color:#777}
  .p{font-size:5px;line-height:6px;font-style:normal;font-weight:400}.p+.p{font-weight:700}
  </style><svg width="32" height="30" viewBox="0 0 32 30" aria-hidden="true"><path d="M14 2C11 11 8 19 6.500 28M23.500 1C20 10 18 18 17 28.500" fill="none" stroke="#00623f" stroke-width="4"/><path d="M0 18C7 12 18 8 31 9.500M5 16C12 14 18 14 22 12" fill="none" stroke="#00623f" stroke-width="3"/></svg>
  <section><div class="cn">假日酒店</div><div class="en">Holiday Inn</div><div class="s">洲际酒店集团旗下</div><div class="p">贵阳机场</div><div class="p">GUIYANG AIRPORT</div></section>`);

define('work-sheet', () => {
  const cols = [23, 122, 97, 55, 82, 100, 41, 39, 38, 39, 40, 40, 40, 40, 40, 39, ...Array(23).fill(40), 55];
  const heads = ['A', 'B', 'C', 'D', 'E', 'F', 'G', ...DAYS, 'AO', 'AP'];
  return `<style>
  :host{display:flex;flex:1;min-height:0;background:#e6e6e6;overflow:hidden}
  .view{position:relative;flex:1;min-width:0;overflow:hidden;background:#fff;border-right:1px solid #9b9b9b;border-bottom:1px solid #9b9b9b}
  table{table-layout:fixed;width:100%;border-collapse:separate;border-spacing:0;font:11px/14px "Liberation Sans","Noto Sans CJK SC",sans-serif;color:#000;text-align:center}
  td,th{padding:0;border-right:1px solid #000;border-bottom:1px solid #000;vertical-align:middle;white-space:nowrap;overflow:hidden;position:relative}
  thead th{height:16px;background:#e6e6e6;border-right:1px solid #b8b8b8;border-bottom:1px solid #9b9b9b;font:400 11px/15px "Open Sans",sans-serif;color:#333}
  thead th.cur{background:#d2d2d2;color:#217346;border-bottom:2px solid #217346;line-height:14px}
  thead .cn{text-align:right}thead .cn x-icon{vertical-align:bottom;margin-right:2px}
  .rh{background:#e6e6e6;border-right:1px solid #9b9b9b;border-bottom:1px solid #b8b8b8;vertical-align:bottom;font:400 11px/13px "Open Sans",sans-serif;color:#333}
  .rh.cur{background:#d2d2d2;color:#217346;border-right:2px solid #217346}
  .n,.n.ao{border:0}
  .r1{height:87px}.r2{height:42px}.r3{height:34px}.r4{height:38px}.r5{height:34px}.r32{height:32px}.r20{height:30px}.r21{height:60px}
  .title h2,.title p{margin:0;padding-left:30px;font:700 13px/20px "Lato","Noto Sans CJK SC",sans-serif}
  .title p{padding-left:8px;font-size:15px}
  .big{font-size:14px}.big.g{padding-left:3px}.h{font-size:11px;line-height:15px}.h span{font-weight:400}
  .w{font:700 9px/14px "Lato","Noto Sans CJK SC",sans-serif;border-right:0}
  .w1{background:#e2efda}.w2{background:#c6e0b4}.w3{background:#a9d08e}.w4{background:#548235}.w5{background:#375623;border-right:1px solid #000}
  .d{font:700 8px/12px "Lato",sans-serif}.we{background:#c65911}.hol{background:#f00}
  .dt{font-size:9px}.b{font-weight:700}
  .r5 td,.r5 th,.pane,.r5 .n{border-bottom:1px solid #9b9b9b}.r5 .ao{border-right:1px solid #d4d4d4}
  .nm{font:11px/14px "Open Sans","Noto Sans CJK SC",sans-serif}
  .rem{font-weight:700;font-size:12px;color:#c00000}
  .s{font-weight:700;font-size:9px}
  .O{background:#ff0}.A{background:#f00;color:#fff}.B{background:#93f;color:#fff}.C{background:#900;color:#fff}.G{background:#bfbfbf}.PH{background:#9f9}.CL{background:#548235}.AL{background:#f3c}.leave{background:#00b050}
  .note::after,.tn::after{content:"";position:absolute;top:0;border-style:solid}
  .note::after{right:0;border-width:0 5px 5px 0;border-color:transparent #f00 transparent transparent}
  .tn::after{left:0;border-width:5px 5px 0 0;border-color:#008000 transparent transparent transparent}
  .sec{font-weight:700;color:#0070c0}
  .remark{background:#a9d08e;text-align:left;vertical-align:top;padding:1px 0 0 2px;line-height:15px;font-weight:700}
  .remark strong{display:block;color:#f00;font-family:"Lato","Noto Sans CJK SC",sans-serif}
  .sel,.ants{overflow:visible;z-index:2}
  .sel::before{content:"";position:absolute;inset:-2px;border:2px solid #217346;box-shadow:inset 0 0 0 1px #fff}
  .sel::after{content:"";position:absolute;right:-3px;bottom:-3px;width:5px;height:5px;background:#217346}
  .ants{z-index:1}.ants::before,.ants::after{content:"";position:absolute;inset:-1px -1px -1px 0;border:2px solid #fff}
  .ants::after{border:2px dashed #217346}
  .dd{position:absolute;z-index:3;left:0;bottom:1px;width:17px;height:17px;background:#fff;border:1px solid #ababab;color:#666}
  .ctrl{position:absolute;z-index:4;right:0;top:35px;width:62px;height:23px;gap:3px;background:#fff;border:1px solid #ababab;color:#444;font:400 12px "Open Sans",sans-serif}
  .freeze{position:absolute;left:558px;top:0;bottom:0;width:1px;background:#9b9b9b;z-index:5}
  .v{display:flex;flex-direction:column;width:15px;margin:2px 3px 0 3px}
  .v button{height:15px;background:#fff;border:1px solid #ababab;color:#666;flex:none}
  .track{flex:1;background:#dadada}.thumb{height:82%;background:#fff;border:1px solid #ababab}
  </style>
  <div class="view"><table><colgroup>${cols.map(w => `<col style="width:${w}px">`).join('')}<col></colgroup>
  <thead><tr><th class="cn"><x-icon name="corner"></x-icon></th>${heads.map(h => `<th scope="col"${h == 'AH' ? ' class="cur"' : ''}>${h}</th>`).join('')}</tr></thead>
  <tbody>${sheetRows()}</tbody></table><div class="freeze"></div></div>
  <div class="v"><button aria-label="向上"><x-icon name="caretUp"></x-icon></button><div class="track"><div class="thumb"></div></div><button aria-label="向下"><x-icon name="caret"></x-icon></button></div>`;
});

/* ---------- sheet tabs and status bar ---------- */
define('sheet-tabs', () => `<style>
  :host{display:flex;align-items:flex-start;height:28px;background:#e6e6e6;border-bottom:1px solid #c6c6c6;color:#444}
  .nav{display:flex;gap:24px;padding:9px 39px 0 27px;color:#b5b5b5}
  .nav button{height:9px}
  .t{height:25px;width:46px;font-size:14px}
  .on{background:#fff;color:#217346;border-bottom:2px solid #217346}
  .t2{width:44px;height:25px;border-right:1px solid #ababab;padding-bottom:2px}
  .add{margin:5px 0 0 33px}
  .dots{margin:8px 14px 0 auto;display:grid;gap:3px}.dots i{width:2px;height:2px;background:#aaa}
  .h{display:flex;width:730px;height:15px;margin:7px 21px 0 0}
  .h button{width:15px;background:#fff;border:1px solid #ababab;color:#666;flex:none}
  .track{flex:1;background:#dadada;margin-right:3px}.thumb{width:94%;height:100%;background:#fff;border:1px solid #ababab}
  </style>
  <div class="nav"><button aria-label="上一张"><x-icon name="left"></x-icon></button><button aria-label="下一张"><x-icon name="right"></x-icon></button></div>
  <button class="t on">1月</button><button class="t t2">2月</button><button class="add" aria-label="新工作表"><x-icon name="plus"></x-icon></button>
  <div class="dots"><i></i><i></i><i></i></div>
  <div class="h"><button aria-label="向左"><x-icon name="left"></x-icon></button><div class="track"><div class="thumb"></div></div><button aria-label="向右"><x-icon name="right"></x-icon></button></div>`);

define('status-bar', () => `<style>
  :host{display:flex;align-items:center;height:22px;background:#f3f3f3;padding:0 8px 0 7px}
  .msg{margin-right:auto;padding-bottom:2px}
  .v{width:38px;height:22px}.on{background:#c6c6c6}
  .z{height:22px;padding:0 4px}
  input{appearance:none;width:100px;height:15px;background:linear-gradient(#999,#999) 51px 50%/1px 7px no-repeat,linear-gradient(#ababab,#ababab) 0 50%/100% 1px no-repeat}
  input::-webkit-slider-thumb{appearance:none;width:5px;height:11px;background:#666}
  .pct{width:32px;text-align:right}
  </style>
  <span class="msg">选定目标区域，然后按 ENTER 或选择“粘贴”</span>
  <button class="v on" aria-label="普通"><x-icon name="vNormal"></x-icon></button><button class="v" aria-label="页面布局"><x-icon name="vPage"></x-icon></button><button class="v" aria-label="分页预览"><x-icon name="vBreak"></x-icon></button>
  <button class="z" aria-label="缩小"><x-icon name="zMinus"></x-icon></button><input type="range" aria-label="缩放" min="0" max="100" value="39"><button class="z" aria-label="放大"><x-icon name="zPlus"></x-icon></button><span class="pct">80%</span>`);

/* ---------- taskbar ---------- */
define('task-app', el => `<style>
  :host{display:flex;width:44px;height:48px;justify-content:center}
  button{position:relative;width:38px;height:38px;margin-top:5px;border-radius:4px}
  :host([run]) button::after{content:"";position:absolute;bottom:0;width:6px;height:3px;border-radius:2px;background:#73917f}
  :host([active]) button{background:#e5f6ef}
  :host([active]) button::after{content:"";position:absolute;bottom:0;width:16px;height:3px;border-radius:2px;background:#0078d4}
  </style><button aria-label="${attr(el, 'icon')}"><x-icon name="${attr(el, 'icon')}"></x-icon></button>`);

define('task-bar', () => `<style>
  :host{display:grid;grid-template-columns:1fr auto 1fr;height:48px;background:#c9ecdd;box-shadow:inset 0 1px #a3bfb3;color:#1b1b1b}
  .w{display:flex;align-items:center;gap:7px;padding-left:19px;line-height:15px;white-space:pre}
  .mid{display:flex;align-items:center;padding-left:2px}
  .q{display:flex;align-items:center;width:218px;height:31px;margin:0 3px;padding:0 5px 0 11px;border-radius:16px;background:#eff9f5;box-shadow:0 0 0 1px #bcdccf}
  .q input{flex:1;min-width:0;font-size:14px;margin-left:10px}.q input::placeholder{color:#555;opacity:1}
  .tray{display:flex;justify-content:flex-end;align-items:center;padding-right:19px;font-size:14px}
  .tray>*{margin-left:16px}
  .tray>.ime{width:22px;text-align:center}.tray>.zh{margin-left:13px}
  .tray x-icon[name=speaker]{margin-left:7px}
  .clock{text-align:right;line-height:15px;font-size:12px}
  </style>
  <div class="w"><x-icon name="cloud"></x-icon><span>12°C
阴</span></div>
  <div class="mid"><task-app icon="start"></task-app><label class="q"><x-icon name="search"></x-icon><input placeholder="搜索" aria-label="搜索"><x-icon name="hats"></x-icon></label>
  <task-app icon="taskview"></task-app><task-app icon="explorer" run></task-app><task-app icon="edge" run></task-app><task-app icon="store"></task-app><task-app icon="calc" run></task-app><task-app icon="wechat" run></task-app><task-app icon="chrome" run></task-app><task-app icon="yen" run></task-app><task-app icon="excel" active></task-app></div>
  <div class="tray"><x-icon name="trayUp"></x-icon><x-icon name="sync"></x-icon><span class="ime zh">中</span><span class="ime">拼</span><x-icon name="monitor"></x-icon><x-icon name="speaker"></x-icon><div class="clock">15:05<br>2025/12/16</div></div>`);

define('excel-app', () => `<style>
  :host{display:flex;flex-direction:column;height:100vh;min-width:0}
  </style><title-bar></title-bar><ribbon-tabs></ribbon-tabs><excel-ribbon></excel-ribbon><formula-bar></formula-bar><work-sheet></work-sheet><sheet-tabs></sheet-tabs><status-bar></status-bar><task-bar></task-bar>`);
</script>
</body>
</html>
